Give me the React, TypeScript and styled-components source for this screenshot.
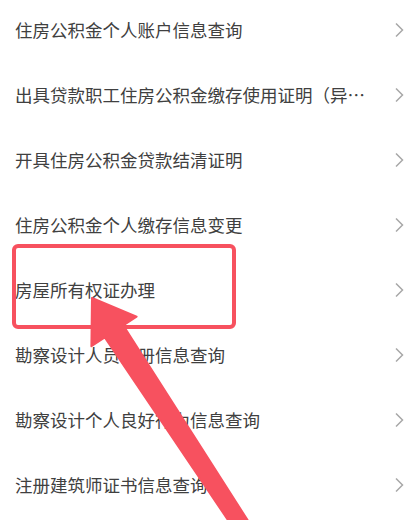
import styled, { createGlobalStyle } from "styled-components";

const GlobalStyle = createGlobalStyle`
  html, body {
    margin: 0;
    padding: 0;
    background-color: #ffffff;
  }
  body {
    font-family: "Noto Sans CJK SC", "Noto Sans", sans-serif;
  }
`;

// the second title is already shortened the way the app shows it
const items = [
  "住房公积金个人账户信息查询",
  "出具贷款职工住房公积金缴存使用证明（异…",
  "开具住房公积金贷款结清证明",
  "住房公积金个人缴存信息变更",
  "房屋所有权证办理",
  "勘察设计人员注册信息查询",
  "勘察设计个人良好行为信息查询",
  "注册建筑师证书信息查询",
];

const Page = styled.div`
  position: relative;
  width: 411px;
  height: 520px;
  overflow: hidden;
  background-color: #ffffff;
`;

const ServiceList = styled.ul`
  list-style: none;
  margin: -3px 0 0;
  padding: 0;
`;

const ServiceRow = styled.li`
  display: flex;
  align-items: center;
  gap: 24px;
  height: 65px;
  padding: 0 6px 0 15px;
  cursor: pointer;
`;

const ServiceName = styled.span`
  flex: 1;
  min-width: 0;
  font-size: 17.5px;
  line-height: 24px;
  color: #404040;
  white-space: nowrap;
`;

const Chevron = styled.svg`
  flex-shrink: 0;
  width: 12px;
  height: 16px;
`;

const Highlight = styled.div`
  position: absolute;
  left: 12px;
  top: 244px;
  width: 224px;
  height: 85px;
  box-sizing: border-box;
  border: 4.5px solid #f7515f;
  border-radius: 6px;
  pointer-events: none;
`;

const Pointer = styled.svg`
  position: absolute;
  left: 0;
  top: 0;
  width: 411px;
  height: 520px;
  pointer-events: none;
`;

const App = () => {
  return (
    <Page>
      <GlobalStyle />
      <ServiceList>
        {items.map((item) => (
          <ServiceRow key={item}>
            <ServiceName>{item}</ServiceName>
            <Chevron viewBox="0 0 12 16">
              <path
                d="M3 1.5 L9.5 8 L3 14.5"
                fill="none"
                stroke="#a8a8a8"
                strokeWidth="1.5"
              />
            </Chevron>
          </ServiceRow>
        ))}
      </ServiceList>
      <Highlight />
      <Pointer viewBox="0 0 411 520">
        <polygon
          points="92,298 136.6,316.6 123.2,325.4 252.4,527.6 239,536.4 104.8,337.4 91.4,346.2"
          fill="#f7515f"
          stroke="#f7515f"
          strokeWidth="2"
          strokeLinejoin="round"
        />
      </Pointer>
    </Page>
  );
};

export default App;
